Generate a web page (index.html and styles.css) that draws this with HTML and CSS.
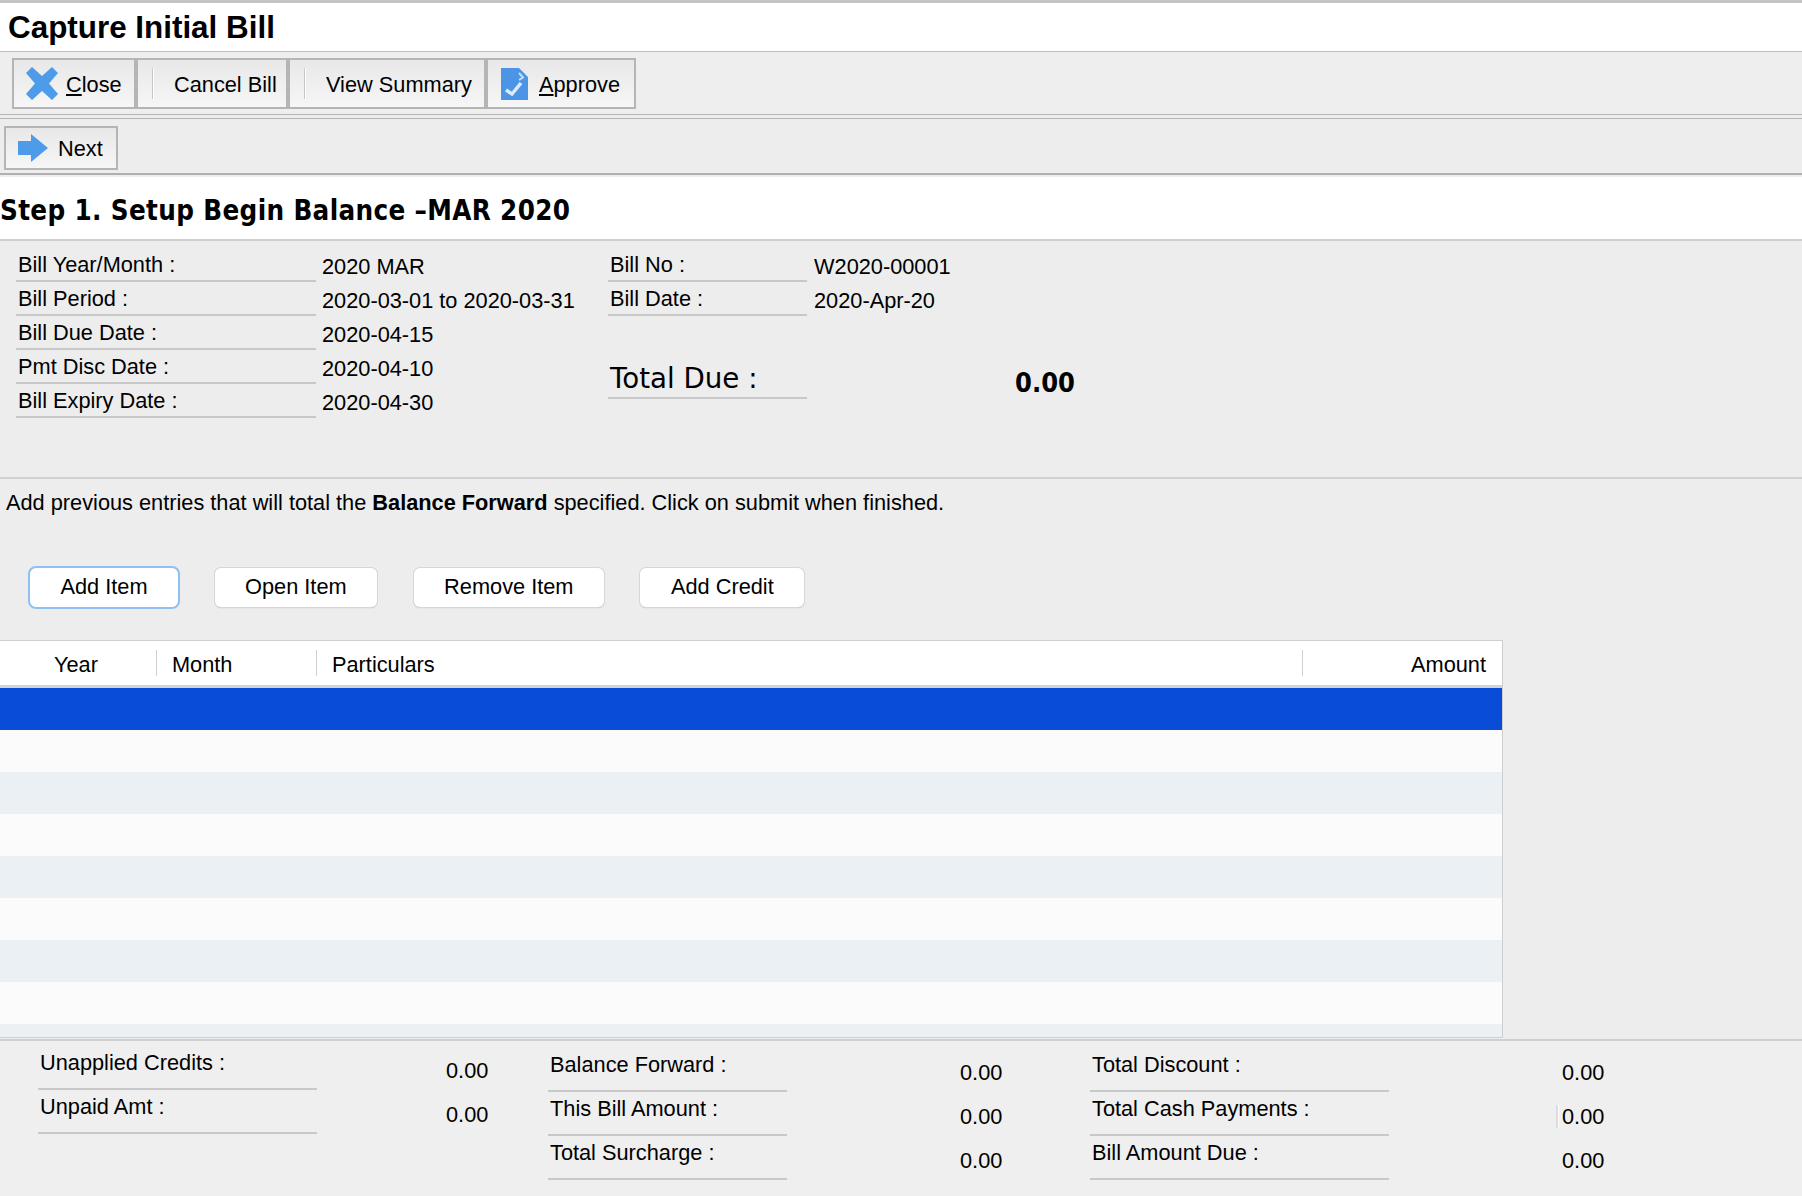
FILE: index.html
```html
<!DOCTYPE html>
<html lang="en">

<head>
    <meta charset="UTF-8">
    <meta name="viewport" content="width=device-width, initial-scale=1.0">
    <title>Capture Initial Bill</title>
    <link rel="stylesheet" href="styles.css">
</head>

<body>
    <h1 class="page-title">Capture Initial Bill</h1>

    <div class="toolbar">
        <button class="tool-btn tool-close">
            <svg class="icon-x" viewBox="0 0 32 33"><path d="M6 0L16 9 26 0 32 6 23 16.500 32 27 26 33 16 24 6 33 0 27 9 16.500 0 6Z" /></svg>
            <span><u>C</u>lose</span>
        </button>
        <button class="tool-btn tool-cancel"><i class="tool-sep"></i><span>Cancel Bill</span></button>
        <button class="tool-btn tool-summary"><i class="tool-sep"></i><span>View Summary</span></button>
        <button class="tool-btn tool-approve">
            <svg class="icon-doc" viewBox="0 0 27 32">
                <path class="doc-page" d="M0 0H18L27 9V32H0Z" />
                <path class="doc-fold" d="M18 5L22 9.500 18 12" />
                <path class="doc-check" d="M5 22L11 26 20 15" />
            </svg>
            <span><u>A</u>pprove</span>
        </button>
    </div>

    <div class="nextbar">
        <button class="tool-btn tool-next">
            <svg class="icon-arrow" viewBox="0 0 30 28"><path d="M0 7H13V0L30 14 13 28V21H0Z" /></svg>
            <span>Next</span>
        </button>
    </div>

    <h2 class="step-title">Step 1. Setup Begin Balance –MAR 2020</h2>

    <div class="info">
        <div class="info-left">
            <div class="field"><div class="field-label">Bill Year/Month :</div><div class="field-value">2020 MAR</div></div>
            <div class="field"><div class="field-label">Bill Period :</div><div class="field-value">2020-03-01 to 2020-03-31</div></div>
            <div class="field"><div class="field-label">Bill Due Date :</div><div class="field-value">2020-04-15</div></div>
            <div class="field"><div class="field-label">Pmt Disc Date :</div><div class="field-value">2020-04-10</div></div>
            <div class="field"><div class="field-label">Bill Expiry Date :</div><div class="field-value">2020-04-30</div></div>
        </div>
        <div class="info-right">
            <div class="field"><div class="field-label">Bill No :</div><div class="field-value">W2020-00001</div></div>
            <div class="field"><div class="field-label">Bill Date :</div><div class="field-value">2020-Apr-20</div></div>
            <div class="field field-total"><div class="field-label">Total Due :</div><div class="field-value">0.00</div></div>
        </div>
    </div>

    <p class="hint">Add previous entries that will total the <b>Balance Forward</b> specified. Click on submit when finished.</p>

    <div class="actions">
        <button class="action-btn action-focus">Add Item</button>
        <button class="action-btn">Open Item</button>
        <button class="action-btn">Remove Item</button>
        <button class="action-btn">Add Credit</button>
    </div>

    <div class="grid">
        <div class="grid-head">
            <div class="col-year">Year</div>
            <div class="col-month">Month</div>
            <div class="col-part">Particulars</div>
            <div class="col-amount">Amount</div>
        </div>
        <div class="grid-row row-selected"></div>
        <div class="grid-row"></div>
        <div class="grid-row row-alt"></div>
        <div class="grid-row"></div>
        <div class="grid-row row-alt"></div>
        <div class="grid-row"></div>
        <div class="grid-row row-alt"></div>
        <div class="grid-row"></div>
        <div class="grid-row row-alt row-cut"></div>
    </div>

    <div class="totals">
        <div class="totals-group group-credits">
            <div class="total-row"><div class="total-label">Unapplied Credits :</div><div class="total-value">0.00</div></div>
            <div class="total-row"><div class="total-label">Unpaid Amt :</div><div class="total-value">0.00</div></div>
        </div>
        <div class="totals-group group-balance">
            <div class="total-row"><div class="total-label">Balance Forward :</div><div class="total-value">0.00</div></div>
            <div class="total-row"><div class="total-label">This Bill Amount :</div><div class="total-value">0.00</div></div>
            <div class="total-row"><div class="total-label">Total Surcharge :</div><div class="total-value">0.00</div></div>
        </div>
        <div class="totals-group group-due">
            <div class="total-row"><div class="total-label">Total Discount :</div><div class="total-value">0.00</div></div>
            <div class="total-row"><div class="total-label">Total Cash Payments :</div><div class="total-value value-mark">0.00</div></div>
            <div class="total-row"><div class="total-label">Bill Amount Due :</div><div class="total-value">0.00</div></div>
        </div>
    </div>
</body>

</html>
```

FILE: styles.css
```css
* {
    box-sizing: border-box;
}

body {
    margin: 0;
    height: 1196px;
    overflow: hidden;
    font-family: "Liberation Sans", Arial, sans-serif;
    font-size: 21.750px;
    color: #000;
    background-color: #ededed;
}

button {
    font: inherit;
    color: inherit;
    padding: 0;
}

.page-title {
    margin: 0;
    height: 52px;
    padding: 7px 0 0 8px;
    font-size: 31.400px;
    line-height: 36px;
    font-weight: bold;
    background-color: #fff;
    border-top: 3px solid #c4c4c4;
    border-bottom: 1px solid #bdbdbd;
}

.toolbar {
    display: flex;
    height: 63px;
    padding: 6px 0 0 12px;
    background-color: #eee;
    border-bottom: 1px solid #b5b5b5;
}

.tool-btn {
    display: flex;
    align-items: center;
    height: 51px;
    background: linear-gradient(#e8e8e8, #f6f6f6);
    border: 2px solid #b5b5b5;
}

.tool-btn span {
    padding-top: 3px;
}

.tool-close {
    width: 124px;
    padding-left: 12px;
    gap: 8px;
}

.tool-cancel {
    width: 152px;
    padding-left: 14px;
    gap: 20px;
}

.tool-summary {
    width: 198px;
    padding-left: 14px;
    gap: 20px;
}

.tool-approve {
    width: 150px;
    padding-left: 13px;
    gap: 11px;
}

.tool-sep {
    display: block;
    width: 2px;
    height: 31px;
    background-color: #c8c8c8;
    border-right: 1px solid #fff;
}

.icon-x {
    width: 32px;
    height: 33px;
    fill: #4d9be9;
}

.icon-doc {
    width: 27px;
    height: 32px;
}

.doc-page {
    fill: #4c95e6;
}

.doc-fold {
    fill: none;
    stroke: #c8dcf4;
    stroke-width: 2;
}

.doc-check {
    fill: none;
    stroke: #dfeafa;
    stroke-width: 3.500;
}

.icon-arrow {
    width: 30px;
    height: 28px;
    fill: #4d9be9;
}

.nextbar {
    height: 57px;
    padding: 7px 0 0 4px;
    background-color: #ededed;
    border-top: 1px solid #b5b5b5;
    margin-top: 3px;
    border-bottom: 2px solid #b0b0b0;
}

.tool-next {
    width: 114px;
    height: 44px;
    padding-left: 12px;
    gap: 10px;
}

.tool-next span {
    padding-top: 2px;
}

.step-title {
    margin: 2px 0 0;
    height: 64px;
    padding: 15px 0 0 0;
    font-family: "DejaVu Sans", sans-serif;
    font-stretch: condensed;
    font-size: 27.500px;
    line-height: 36px;
    letter-spacing: 0.350px;
    font-weight: bold;
    background-color: #fff;
    border-bottom: 2px solid #cfcfcf;
}

.info {
    display: flex;
    height: 238px;
    padding: 7px 0 0 16px;
    border-bottom: 2px solid #d0d0d0;
}

.info-left {
    width: 592px;
}

.field {
    display: flex;
    height: 34px;
}

.field-label {
    height: 34px;
    padding-left: 2px;
    line-height: 34px;
    border-bottom: 2px solid #c8c8c8;
}

.field-value {
    line-height: 38px;
    white-space: nowrap;
}

.info-left .field-label {
    width: 300px;
}

.info-left .field-value {
    margin-left: 6px;
}

.info-right .field-label {
    width: 199px;
}

.info-right .field-value {
    margin-left: 7px;
}

.info-right .field-total {
    height: 50px;
    margin-top: 33px;
}

.field-total .field-label {
    height: 50px;
    font-family: "DejaVu Sans", sans-serif;
    font-size: 27.700px;
    line-height: 60px;
}

.info-right .field-total .field-value {
    margin-left: 208px;
    font-family: "DejaVu Sans", sans-serif;
    font-stretch: condensed;
    font-weight: bold;
    font-size: 27px;
    line-height: 68px;
}

.hint {
    margin: 0;
    height: 67px;
    padding: 10px 0 0 6px;
    line-height: 28px;
}

.actions {
    display: flex;
    gap: 36.500px;
    height: 94px;
    padding: 22px 0 0 30px;
}

.action-btn {
    height: 39px;
    padding: 0 30.500px 2px;
    background-color: #fff;
    border: 0;
    border-radius: 6px;
    box-shadow: 0 0 0 1px #d6d6d6, 0 1px 1px #aaa;
}

.action-focus {
    box-shadow: 0 0 0 2px #8fc0f2;
}

.grid {
    width: 1503px;
    height: 398px;
    overflow: hidden;
    border: 1px solid #cfcfcf;
    border-left: 0;
}

.grid-head {
    display: grid;
    grid-template-columns: 156px 160px 986px 1fr;
    align-items: center;
    height: 47px;
    background-color: #fff;
    border-bottom: 3px solid #d4d4d4;
}

.grid-head > div {
    height: 26px;
    line-height: 30px;
    white-space: nowrap;
    border-left: 1px solid #d0d0d0;
}

.grid-head .col-year {
    padding-left: 54px;
    border-left: 0;
}

.col-month {
    padding-left: 15px;
}

.col-part {
    padding-left: 15px;
}

.col-amount {
    padding-right: 16px;
    text-align: right;
}

.grid-row {
    height: 42px;
    background-color: #fbfbfb;
}

.row-alt {
    background-color: #ebf0f5;
}

.row-selected {
    background-color: #084cd8;
}

.totals {
    display: flex;
    height: 158px;
    margin-top: 1px;
    background-color: #efefef;
    border-top: 2px solid #cfcfcf;
}

.totals-group {
    display: flex;
    flex-direction: column;
}

.total-row {
    display: flex;
    height: 44px;
}

.total-label {
    height: 44px;
    padding-left: 2px;
    line-height: 34px;
    white-space: nowrap;
    border-bottom: 2px solid #c8c8c8;
}

.total-value {
    line-height: 50px;
}

.group-credits {
    width: 510px;
    margin-left: 38px;
    padding-top: 5px;
}

.group-credits .total-label {
    width: 279px;
}

.group-credits .total-value {
    margin-left: 129px;
}

.group-balance {
    width: 542px;
    padding-top: 7px;
}

.group-balance .total-label {
    width: 239px;
}

.group-balance .total-value {
    margin-left: 173px;
}

.group-due {
    padding-top: 7px;
}

.group-due .total-label {
    width: 299px;
}

.group-due .total-value {
    margin-left: 173px;
}

/* leftover cursor mark beside the cash payments value */
.value-mark {
    position: relative;
}

.value-mark::before {
    content: "";
    position: absolute;
    left: -6px;
    top: 13px;
    width: 2px;
    height: 23px;
    background-color: #dcdcdc;
    border-right: 1px solid #fff;
}
```
